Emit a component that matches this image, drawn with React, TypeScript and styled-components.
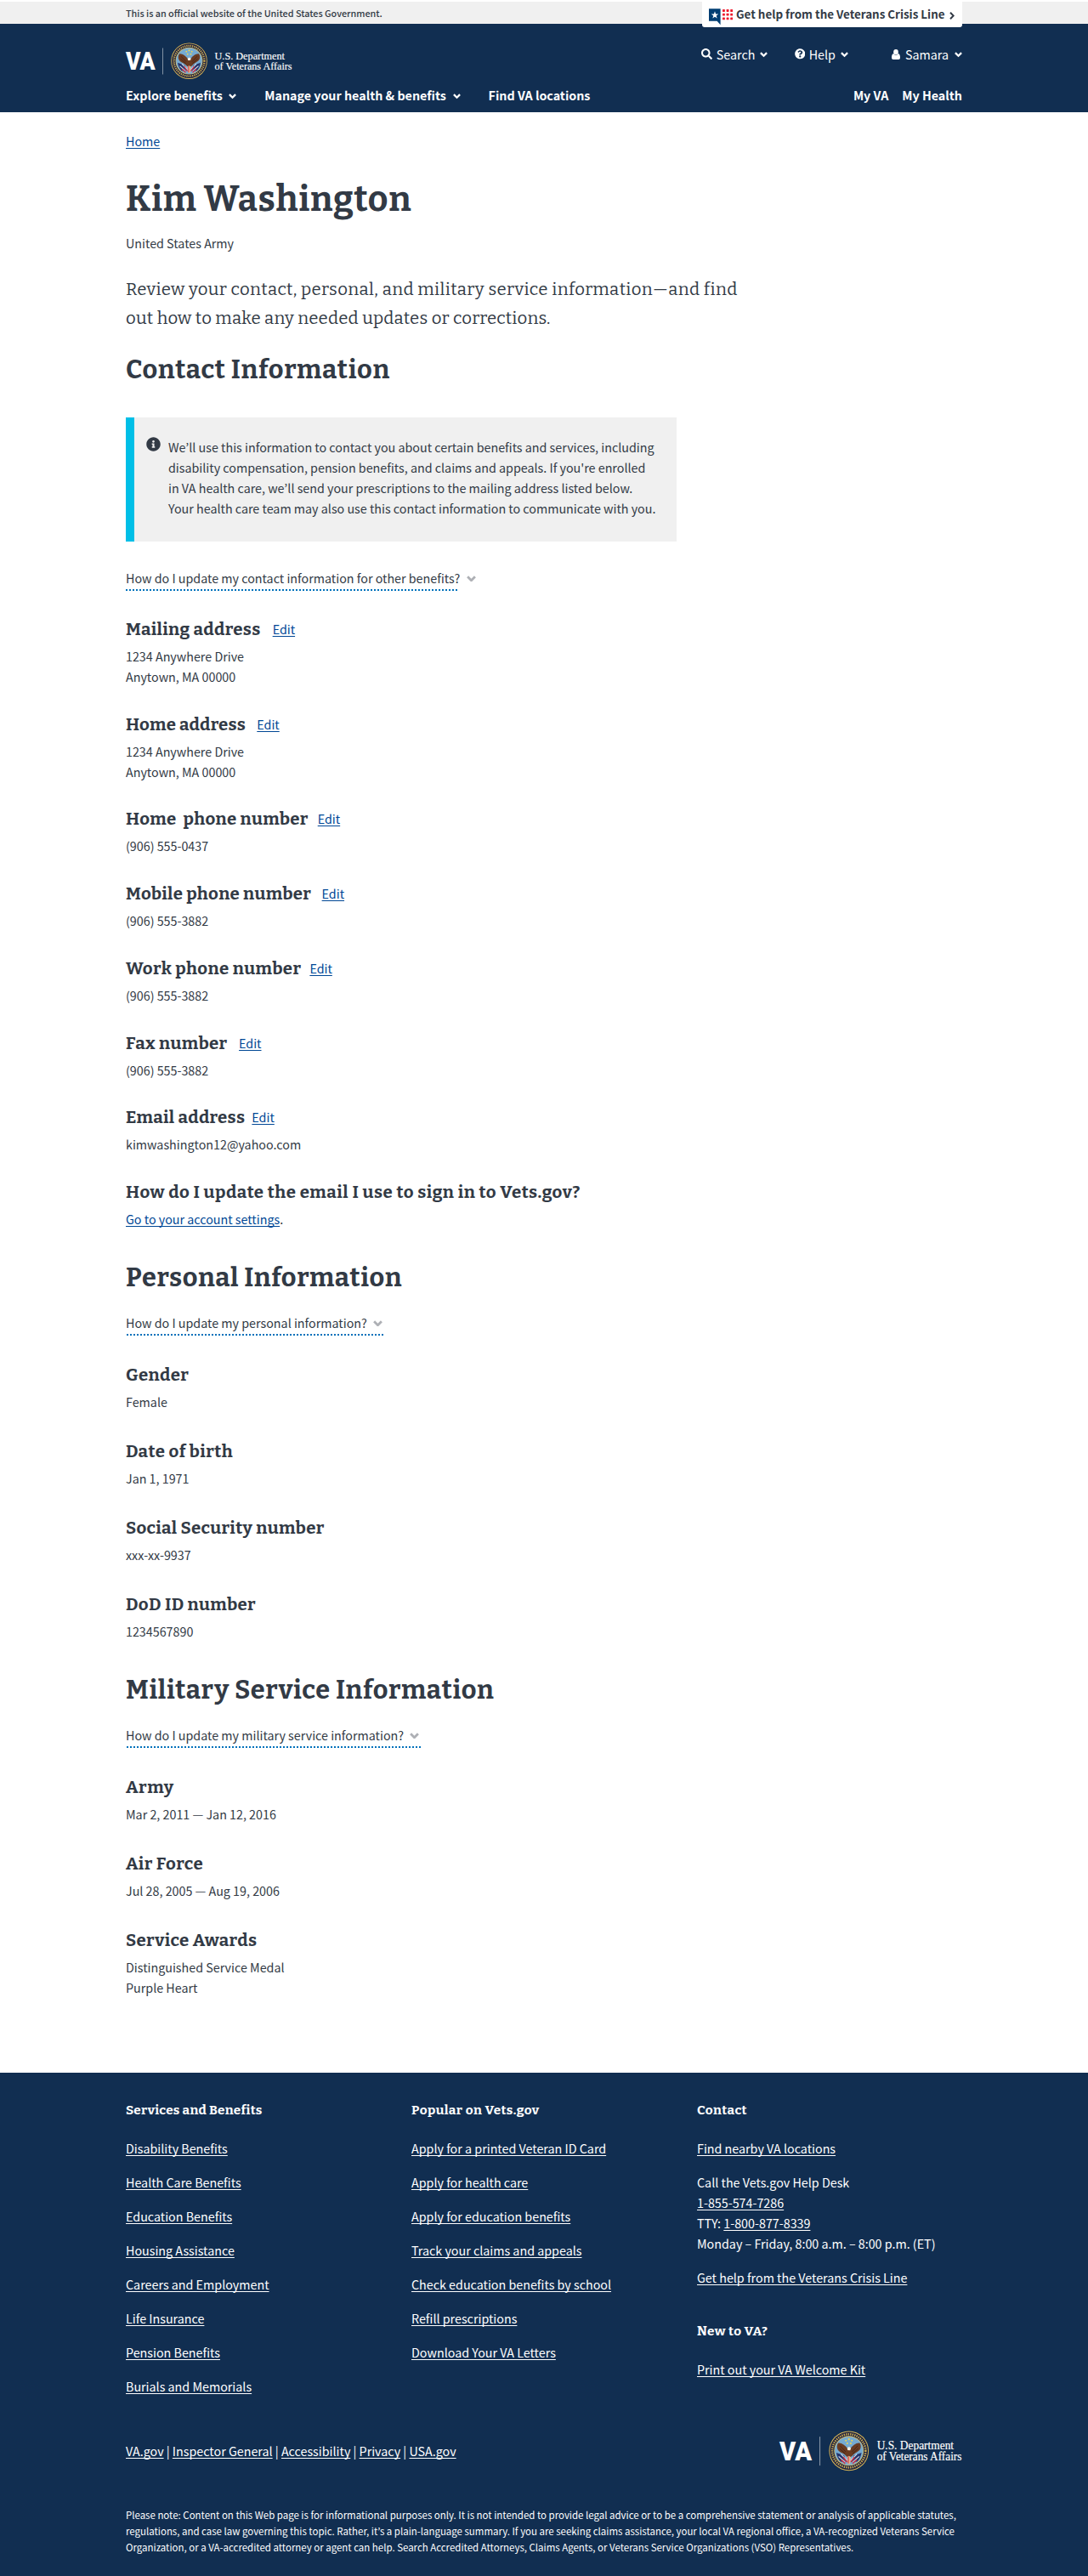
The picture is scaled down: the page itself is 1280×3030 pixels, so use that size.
import React from "react";
import styled, { createGlobalStyle } from "styled-components";
import { FaInfoCircle, FaQuestionCircle, FaSearch } from "react-icons/fa";

const sans = `"Noto Sans CJK JP", "Open Sans", sans-serif`;
const serif = `"Bitter", "DejaVu Serif Condensed", serif`;
const navy = "#112e51";
const ink = "#323a45";
const linkBlue = "#004795";

const GlobalStyle = createGlobalStyle`
  * { box-sizing: border-box; }
  body {
    margin: 0;
    background: #fff;
    color: ${ink};
    font-family: ${sans};
    font-size: 14.31px;
    line-height: 24px;
  }
  h1, h2, h3, h4, p, ul { margin: 0; padding: 0; }
  ul { list-style: none; }
`;

const Container = styled.div`
  width: 984px;
  margin: 0 auto;
`;

/* ---------- shared links ---------- */

const Link = styled.a<{ $light?: boolean }>`
  color: ${(p) => (p.$light ? "#fff" : linkBlue)};
  text-decoration: underline;
  text-decoration-thickness: 1px;
  text-decoration-skip-ink: none;
  text-underline-offset: 2px;
  white-space: nowrap;
`;

/* ---------- government banner ---------- */

const Banner = styled.div`
  height: 28px;
  border-top: 2px solid #fff;
  background: #f0f0f0;
`;

const BannerRow = styled(Container)`
  display: flex;
  justify-content: space-between;
  align-items: flex-start;
`;

const BannerText = styled.span`
  font-size: 10.8px;
  font-weight: 500;
  line-height: 26px;
`;

const CrisisLine = styled.a`
  position: relative;
  display: flex;
  align-items: flex-start;
  width: 306px;
  height: 30px;
  padding: 2px 9px 0 8px;
  border-radius: 0 0 3px 3px;
  background: #fff;
  font-size: 13.38px;
  font-weight: 700;
  white-space: nowrap;
`;

const CrisisFlag = styled.svg`
  flex: none;
  margin: 6px 4px 0 0;
`;

const CrisisArrow = styled.svg`
  flex: none;
  margin: 10px 0 0 auto;
`;

/* ---------- header ---------- */

const HeaderBar = styled.header`
  height: 104px;
  padding-top: 22px;
  background: ${navy};
  color: #fff;
`;

const HeaderTop = styled(Container)`
  display: flex;
  justify-content: space-between;
  align-items: flex-start;
  height: 44px;
`;

const Utilities = styled.div`
  display: flex;
  padding-top: 2px;
`;

const Utility = styled.a<{ $before: number; $iconGap: number }>`
  display: flex;
  align-items: center;
  margin-left: ${(p) => p.$before}px;

  > :first-child {
    margin-right: ${(p) => p.$iconGap}px;
    margin-top: -1px;
  }
`;

const MainNav = styled(Container)`
  display: flex;
  line-height: 36px;
  font-weight: 700;
  white-space: nowrap;
`;

const NavItem = styled.a<{ $before?: number }>`
  display: flex;
  align-items: center;
  margin-left: ${(p) => p.$before ?? 0}px;
`;

const NavEnd = styled.div`
  display: flex;
  margin-left: auto;
`;

const ChevronSvg = styled.svg<{ $gap: number; $drop?: number }>`
  flex: none;
  margin: ${(p) => p.$drop ?? 0}px 0 0 ${(p) => p.$gap}px;
`;

const LogoSvg = styled.svg`
  flex: none;
  overflow: visible;
`;

/* ---------- page body ---------- */

const Main = styled(Container).attrs({ as: "main" })`
  padding: 22px 0 88px;
`;

const PageTitle = styled.h1`
  margin-top: 33px;
  font: 700 41px/48px ${serif};
  letter-spacing: 0.8px;
`;

const Branch = styled.p`
  margin-top: 15px;
`;

const Intro = styled.p`
  width: 740px;
  margin-top: 25px;
  font: 400 20.4px/34px ${serif};
`;

const IntroLine = styled.span<{ $track: number }>`
  display: block;
  letter-spacing: ${(p) => p.$track}px;
  white-space: nowrap;
`;

const SectionTitle = styled.h2<{ $before?: number; $track: number }>`
  margin-top: ${(p) => p.$before ?? 39}px;
  font: 700 30.7px/36px ${serif};
  letter-spacing: ${(p) => p.$track}px;
`;

const Alert = styled.div`
  display: flex;
  gap: 9px;
  width: 648px;
  height: 146px;
  margin-top: 38px;
  padding: 23px 0 0 14px;
  border-left: 10px solid #00bfe7;
  background: #f0f0f0;
  white-space: pre-line;

  svg { flex: none; }
`;

const Disclosure = styled.button<{ $before?: number; $indent?: number; $line: number }>`
  display: flex;
  align-items: center;
  min-width: 350px;
  height: 27px;
  margin-top: ${(p) => p.$before ?? 23}px;
  padding: 0 0 3px;
  border: 0;
  background: repeating-linear-gradient(90deg, #0071bb 0 2px, transparent 2px 4px)
    ${(p) => p.$indent ?? 0}px 100% / ${(p) => p.$line}px 2px no-repeat;
  color: inherit;
  font: inherit;
  white-space: nowrap;
`;

const FieldBlock = styled.section<{ $before: number }>`
  margin-top: ${(p) => p.$before}px;
`;

const FieldHead = styled.div`
  display: flex;
  align-items: center;
  height: 28px;
  margin-bottom: 6px;
`;

const FieldName = styled.h3<{ $track?: number }>`
  font: 700 20.4px/28px ${serif};
  letter-spacing: ${(p) => p.$track ?? 0.37}px;
  white-space: pre;
`;

const EditLink = styled(Link)<{ $gap: number }>`
  margin: -1px 0 0 ${(p) => p.$gap}px;
`;

/* ---------- footer ---------- */

const FooterBar = styled.footer`
  height: 592px;
  padding-top: 34px;
  background: ${navy};
  color: #fff;
`;

const FooterColumns = styled(Container)`
  display: grid;
  grid-template-columns: 336px 336px 1fr;
`;

const FooterTitle = styled.h4<{ $before?: number; $track?: number }>`
  margin: ${(p) => p.$before ?? 0}px 0 23px;
  font: 700 15.3px/20px ${serif};
  letter-spacing: ${(p) => p.$track ?? 0.4}px;
`;

const FooterList = styled.ul`
  display: flex;
  flex-direction: column;
  gap: 16px;
`;

const FooterBottom = styled(Container)`
  display: flex;
  justify-content: space-between;
  align-items: center;
  height: 48px;
  margin-top: 40px;
`;

const Disclaimer = styled(Container).attrs({ as: "p" })`
  && { margin: 42px auto 0; }
  font-size: 11.46px;
  line-height: 19px;
  white-space: pre;
`;

/* ---------- drawings ---------- */

function Chevron({ gap, color = "#fff", width = 9, drop }: { gap: number; color?: string; width?: number; drop?: number }) {
  return (
    <ChevronSvg $gap={gap} $drop={drop} width={width} height={(width * 6.4) / 9} viewBox="0 0 9 6.4">
      <path d="M0.900 1.100 L4.500 4.700 L8.100 1.100" fill="none" stroke={color} strokeWidth="2.300" />
    </ChevronSvg>
  );
}

function UserIcon() {
  return (
    <svg width="10" height="12" viewBox="0 0 10 12" fill="#fff">
      <ellipse cx="5" cy="3.200" rx="2.800" ry="3.200" />
      <path d="M2.300 5.100C3 6.400 4 7 5 7s2-.6 2.700-1.900C9.500 5.500 10 7.600 10 9.800 10 11.200 9.200 12 8.100 12H1.900C.8 12 0 11.200 0 9.800 0 7.600.5 5.500 2.300 5.100Z" />
    </svg>
  );
}

function FlagIcon() {
  const steps = [0, 1, 2];
  return (
    <CrisisFlag width="28" height="20" viewBox="0 0 28 20">
      <path d="M0 .2H13.600V19.200L9.600 14.800H0Z" fill="#003e73" />
      <path d="M7 3.300 8.100 6.400H11.300L8.700 8.400 9.700 11.600 7 9.700 4.300 11.600 5.300 8.400 2.700 6.400H5.900Z" fill="#fff" />
      {steps.map((r) =>
        steps.map((c) => <rect key={`${r}${c}`} x={16 + c * 4.6} y={1 + r * 4.7} width="2.900" height="2.900" rx=".6" fill="#ee1c2e" />)
      )}
    </CrisisFlag>
  );
}

function Seal() {
  return (
    <g transform="translate(74.500 21.700)">
      <circle r="21.300" fill="#d9b756" />
      <circle r="20.400" fill="#1c2142" />
      <circle r="17.900" fill="none" stroke="#c9a94f" strokeWidth="2.300" strokeDasharray="1.300 1" />
      <circle r="15.900" fill="#e0c263" />
      <circle r="15.200" fill="#75aad2" />
      <g fill="#f2d64b">
        <circle cx="0" cy="-12.500" r="1" />
        <circle cx="-3.200" cy="-11" r=".9" />
        <circle cx="3.200" cy="-11" r=".9" />
        <circle cx="-1.800" cy="-8" r=".9" />
        <circle cx="2" cy="-8" r=".9" />
      </g>
      <path d="M-13.500 2 -5 5 -3 12 -9 11.500Q-12.500 8-13.500 2Z" fill="#26356b" />
      <path d="M13.500 2 5 5 3 12 9 11.500Q12.500 8 13.500 2Z" fill="#26356b" />
      <path d="M-11 6-4 12M-8.500 3.500-2 10M11 6 4 12M8.500 3.500 2 10" stroke="#d9dce8" strokeWidth="1.100" />
      <path d="M-8.500 9.500-4 13.500M8.500 9.500 4 13.500M-6 6.500-2 12M6 6.500 2 12" stroke="#c9344a" strokeWidth="1.400" />
      <path
        d="M-11.500-8.500C-8-9-4-6-1.500-2.500L0-3.500 2-2.800C4-6 8-9 11.500-8.500 13.500-5.500 13-2 10.500 0 8 2 5.500 3 3.500 5.500L0 8-3 5.500C-5 3-8 2.500-10.500.5-13-2-13.500-5.500-11.500-8.500Z"
        fill="#6a3b22"
      />
      <path d="M-9.500-5.500-3.500 1M-10-2.500-4 3M9.500-5.500 3.500 1M10-2.500 4 3" stroke="#3f2115" strokeWidth=".8" />
      <path d="M-1.800-3Q.2-5.200 2.200-2.800L1.400-.6-1.400-.8Z" fill="#f3efe6" />
      <path d="M-2 6.500 0 5.500 2 6.500 1.300 14H-1.300Z" fill="#e7b98c" />
      <path d="M-.6 6V13.500" stroke="#c9344a" strokeWidth="1" />
    </g>
  );
}

function Logo({ width }: { width: number }) {
  return (
    <LogoSvg width={width} height={(width * 44) / 196} viewBox="0 0 196 44" fill="#fff">
      <text x="0" y="32" fontFamily="Roboto, sans-serif" fontWeight="900" fontSize="29.300" textLength="34.700" lengthAdjust="spacingAndGlyphs">
        VA
      </text>
      <rect x="43" y="6.500" width=".8" height="31" opacity=".6" />
      <Seal />
      <g fontFamily="'Liberation Serif', serif" fontSize="12.500" stroke="#fff" strokeWidth=".15">
        <text x="104.500" y="20.300" textLength="82.500" lengthAdjust="spacingAndGlyphs">U.S. Department</text>
        <text x="104.500" y="32.200" textLength="91" lengthAdjust="spacingAndGlyphs">of Veterans Affairs</text>
      </g>
    </LogoSvg>
  );
}

/* ---------- content ---------- */

type FieldData = { name: string; lines: string[]; before: number; track?: number; edit?: number };

const contactFields: FieldData[] = [
  { name: "Mailing address", lines: ["1234 Anywhere Drive", "Anytown, MA 00000"], before: 31, track: 0.35, edit: 14 },
  { name: "Home address", lines: ["1234 Anywhere Drive", "Anytown, MA 00000"], before: 30, track: 0.2, edit: 13.3 },
  { name: "Home  phone number", lines: ["(906) 555-0437"], before: 29, track: 0.32, edit: 11 },
  { name: "Mobile phone number", lines: ["(906) 555-3882"], before: 30, track: 0.3, edit: 12.5 },
  { name: "Work phone number", lines: ["(906) 555-3882"], before: 30, track: 0.4, edit: 10 },
  { name: "Fax number", lines: ["(906) 555-3882"], before: 30, edit: 13.5 },
  { name: "Email address", lines: ["kimwashington12@yahoo.com"], before: 29, track: 0.32, edit: 8 },
];

const personalFields: FieldData[] = [
  { name: "Gender", lines: ["Female"], before: 32 },
  { name: "Date of birth", lines: ["Jan 1, 1971"], before: 32, track: 0.45 },
  { name: "Social Security number", lines: ["xxx-xx-9937"], before: 32 },
  { name: "DoD ID number", lines: ["1234567890"], before: 32 },
];

const serviceFields: FieldData[] = [
  { name: "Army", lines: ["Mar 2, 2011 — Jan 12, 2016"], before: 32, track: 0.7 },
  { name: "Air Force", lines: ["Jul 28, 2005 — Aug 19, 2006"], before: 32, track: 0.45 },
  { name: "Service Awards", lines: ["Distinguished Service Medal", "Purple Heart"], before: 32 },
];

const benefitLinks = [
  "Disability Benefits",
  "Health Care Benefits",
  "Education Benefits",
  "Housing Assistance",
  "Careers and Employment",
  "Life Insurance",
  "Pension Benefits",
  "Burials and Memorials",
];

const popularLinks = [
  "Apply for a printed Veteran ID Card",
  "Apply for health care",
  "Apply for education benefits",
  "Track your claims and appeals",
  "Check education benefits by school",
  "Refill prescriptions",
  "Download Your VA Letters",
];

const siteLinks = ["VA.gov", "Inspector General", "Accessibility", "Privacy", "USA.gov"];

function Field({ data }: { data: FieldData }) {
  return (
    <FieldBlock $before={data.before}>
      <FieldHead>
        <FieldName $track={data.track}>{data.name}</FieldName>
        {data.edit !== undefined && <EditLink $gap={data.edit}>Edit</EditLink>}
      </FieldHead>
      {data.lines.map((line) => (
        <p key={line}>{line}</p>
      ))}
    </FieldBlock>
  );
}

function LinkList({ items }: { items: string[] }) {
  return (
    <FooterList>
      {items.map((item) => (
        <li key={item}>
          <Link $light>{item}</Link>
        </li>
      ))}
    </FooterList>
  );
}

export default function App() {
  return (
    <>
      <GlobalStyle />
      <Banner>
        <BannerRow>
          <BannerText>This is an official website of the United States Government.</BannerText>
          <CrisisLine>
            <FlagIcon />
            Get help from the Veterans Crisis Line
            <CrisisArrow width="6" height="9" viewBox="0 0 6 9">
              <path d="M1 .8 4.700 4.500 1 8.200" fill="none" stroke={ink} strokeWidth="2" />
            </CrisisArrow>
          </CrisisLine>
        </BannerRow>
      </Banner>

      <HeaderBar>
        <HeaderTop>
          <Logo width={196} />
          <Utilities>
            <Utility $before={0} $iconGap={4.3}>
              <FaSearch size={13} />
              Search
              <Chevron gap={6} drop={1} />
            </Utility>
            <Utility $before={31.5} $iconGap={4.3}>
              <FaQuestionCircle size={12.5} />
              Help
              <Chevron gap={6} drop={1} />
            </Utility>
            <Utility $before={51.5} $iconGap={5.5}>
              <UserIcon />
              Samara
              <Chevron gap={7} drop={1} />
            </Utility>
          </Utilities>
        </HeaderTop>
        <MainNav as="nav">
          <NavItem>
            Explore benefits
            <Chevron gap={7} drop={3} />
          </NavItem>
          <NavItem $before={33.3}>
            Manage your health &amp; benefits
            <Chevron gap={8} drop={3} />
          </NavItem>
          <NavItem $before={32.7}>Find VA locations</NavItem>
          <NavEnd>
            <NavItem>My VA</NavItem>
            <NavItem $before={16}>My Health</NavItem>
          </NavEnd>
        </MainNav>
      </HeaderBar>

      <Main>
        <Link>Home</Link>
        <PageTitle>Kim Washington</PageTitle>
        <Branch>United States Army</Branch>
        <Intro>
          <IntroLine $track={0.35}>Review your contact, personal, and military service information—and find</IntroLine>
          <IntroLine $track={0.2}>out how to make any needed updates or corrections.</IntroLine>
        </Intro>

        <SectionTitle $before={26} $track={0.67}>Contact Information</SectionTitle>
        <Alert>
          <FaInfoCircle size={17} />
          <p>
            {"We’ll use this information to contact you about certain benefits and services, including\ndisability compensation, pension benefits, and claims and appeals. If you're enrolled\nin VA health care, we’ll send your prescriptions to the mailing address listed below.\nYour health care team may also use this contact information to communicate with you."}
          </p>
        </Alert>
        <Disclosure $before={31} $line={390}>
          How do I update my contact information for other benefits?
          <Chevron gap={8} color="#aeb0b5" width={11} drop={1} />
        </Disclosure>
        {contactFields.map((f) => (
          <Field key={f.name} data={f} />
        ))}
        <FieldBlock $before={30}>
          <FieldHead>
            <FieldName $track={0.53}>How do I update the email I use to sign in to Vets.gov?</FieldName>
          </FieldHead>
          <p>
            <Link>Go to your account settings</Link>.
          </p>
        </FieldBlock>

        <SectionTitle $track={0.55}>Personal Information</SectionTitle>
        <Disclosure $indent={1} $line={302}>
          How do I update my personal information?
          <Chevron gap={7} color="#aeb0b5" width={11} drop={1} />
        </Disclosure>
        {personalFields.map((f) => (
          <Field key={f.name} data={f} />
        ))}

        <SectionTitle $track={0.62}>Military Service Information</SectionTitle>
        <Disclosure $indent={1} $line={346}>
          How do I update my military service information?
          <Chevron gap={7} color="#aeb0b5" width={11} drop={1} />
        </Disclosure>
        {serviceFields.map((f) => (
          <Field key={f.name} data={f} />
        ))}
      </Main>

      <FooterBar>
        <FooterColumns>
          <div>
            <FooterTitle $track={0.25}>Services and Benefits</FooterTitle>
            <LinkList items={benefitLinks} />
          </div>
          <div>
            <FooterTitle $track={0.44}>Popular on Vets.gov</FooterTitle>
            <LinkList items={popularLinks} />
          </div>
          <div>
            <FooterTitle>Contact</FooterTitle>
            <FooterList>
              <li>
                <Link $light>Find nearby VA locations</Link>
              </li>
              <li>
                Call the Vets.gov Help Desk
                <br />
                <Link $light>1-855-574-7286</Link>
                <br />
                TTY: <Link $light>1-800-877-8339</Link>
                <br />
                Monday – Friday, 8:00 a.m. – 8:00 p.m. (ET)
              </li>
              <li>
                <Link $light>Get help from the Veterans Crisis Line</Link>
              </li>
            </FooterList>
            <FooterTitle $before={41}>New to VA?</FooterTitle>
            <Link $light>Print out your VA Welcome Kit</Link>
          </div>
        </FooterColumns>
        <FooterBottom>
          <div>
            {siteLinks.map((item, i) => (
              <React.Fragment key={item}>
                {i > 0 && " | "}
                <Link $light>{item}</Link>
              </React.Fragment>
            ))}
          </div>
          <Logo width={215} />
        </FooterBottom>
        <Disclaimer>
          {"Please note: Content on this Web page is for informational purposes only. It is not intended to provide legal advice or to be a comprehensive statement or analysis of applicable statutes,\nregulations, and case law governing this topic. Rather, it’s a plain-language summary. If you are seeking claims assistance, your local VA regional office, a VA-recognized Veterans Service\nOrganization, or a VA-accredited attorney or agent can help. Search Accredited Attorneys, Claims Agents, or Veterans Service Organizations (VSO) Representatives."}
        </Disclaimer>
      </FooterBar>
    </>
  );
}
